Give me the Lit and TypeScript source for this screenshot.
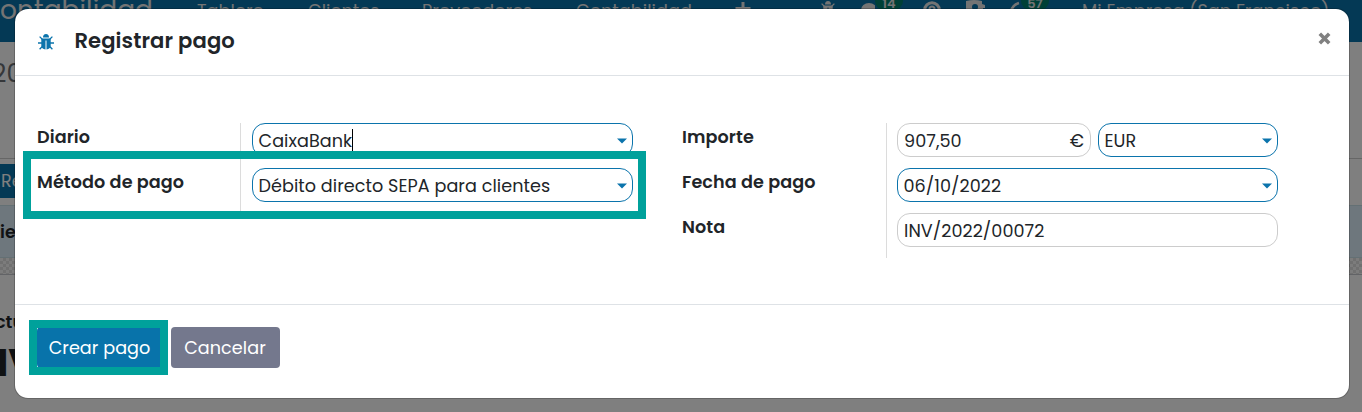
import { LitElement, html, css } from "lit";
import { customElement, property } from "lit/decorators.js";

const bug = html`<svg class="bug" viewBox="0 0 16 16" width="16" height="16" fill="none" stroke="currentColor">
  <path d="M5 3.600a3 3.500 0 0 1 6 0z" fill="currentColor" stroke="none"/>
  <path d="M3.300 4.600h9.400v7c0 2.200-1.800 3.800-4.200 4V6.500h-1v9.100C5 15.400 3.300 13.800 3.300 11.600z" fill="currentColor" stroke="none"/>
  <path d="M1.600 2.600 4.300 5.300M14.400 2.600 11.700 5.300M0 9h4M12 9h4M1.600 15.300 4.500 12.300M14.400 15.300 11.500 12.300" stroke-width="1.300"/>
</svg>`;

@customElement("form-field")
class FormField extends LitElement {
  @property() value = "";
  @property() suffix = "";
  @property({ type: Boolean }) select = false;
  @property({ type: Boolean }) caret = false;

  static styles = css`
    :host { display: block; min-width: 0; }
    .box {
      box-sizing: border-box; height: 34px; display: flex; align-items: center;
      border: 1px solid #ccc; border-radius: 13px; padding: 2px 6px 0 6px;
      background: #fff; color: #212529; font-size: 17.6px; letter-spacing: .06px; white-space: nowrap;
    }
    .select { border-color: #0b74ac; padding: 2px 5px 0 5.500px; }
    .grow { flex: 1; display: flex; align-items: center; }
    .cursor { width: 1px; height: 24px; background: #000; }
    .arrow { display: block; margin-top: -1px; }
  `;
  render() {
    return html`<div class="box ${this.select ? "select" : ""}">
      <span class="grow"><span>${this.value}</span>${this.caret ? html`<i class="cursor"></i>` : ""}</span>
      ${this.suffix ? html`<span>${this.suffix}</span>` : ""}
      ${this.select ? html`<svg class="arrow" width="10" height="6"><path d="M0 .5h10l-5 5z" fill="#0b74ac"/></svg>` : ""}
    </div>`;
  }
}

@customElement("app-root")
class AppRoot extends LitElement {
  static styles = css`
    :host {
      display: block; position: relative; width: 1362px; height: 412px; overflow: hidden;
      font-family: Poppins, Inter, "Open Sans", sans-serif;
      color: #212529; background: #fff;
    }
    * { box-sizing: border-box; }
    svg { display: block; }
    .nav {
      height: 42px; background: #0873aa; color: #e8e8e8; display: grid; white-space: nowrap;
      grid-template-columns: 197px 111px 114px 154px 159px 85px 41px 62px 42px 45px 72px 1fr;
      font-size: 17.6px; line-height: 23px; letter-spacing: .08px; align-items: start; overflow: hidden;
    }
    .brand { width: 153px; display: flex; justify-content: flex-end; font-size: 26.4px; line-height: 20px; }
    .nav .bug { margin-top: 1px; }
    .tool { display: flex; }
    .badge {
      background: #00806e; border-radius: 9px; height: 18px; width: 28px; margin-top: -8px;
      font-size: 13px; font-weight: 600; line-height: 23px; text-align: center; color: #e8e8e8;
    }
    .crumb { height: 117px; border-bottom: 1px solid #ccc; padding-top: 15px; font-size: 25px; line-height: 34px; color: #6a6f74; }
    .crumb span { margin-left: -8px; }
    .status { height: 46px; padding-top: 5px; }
    .action { width: 90px; height: 34px; background: #0873aa; color: #fff; font-size: 17.6px; line-height: 35px; padding-left: 1px; }
    .alert { height: 53px; background: #dceefb; border: solid #c8e0e8; border-width: 1px 0; line-height: 52px; font-weight: 600; font-size: 17.6px; }
    .texture {
      height: 17px; border-bottom: 1px solid #c4c6cc;
      background: repeating-conic-gradient(#e0e0e0 0 25%, #f8f8f8 0 50%) 0 0 / 6px 6px;
    }
    .sheet { padding-top: 35px; font-weight: 600; font-size: 17.6px; line-height: 24px; }
    .sheet span { margin-left: -5px; }
    .sheet h1 { margin: 5px 0 0 -32.500px; font-size: 39px; line-height: 48px; font-weight: 700; }
    .backdrop { position: absolute; inset: 0; background: rgba(0,0,0,.5); padding: 8px 12px 13px 14px; }
    .modal {
      height: 391px; background: #fff; background-clip: padding-box; border: 1px solid rgba(0,0,0,.2);
      border-radius: 14px; position: relative; display: flex; flex-direction: column;
    }
    .head { height: 67px; border-bottom: 1px solid #dee2e6; display: flex; padding: 0 18.500px 0 23px; }
    .head .icon { color: #0b74ac; padding-top: 25px; }
    h4 { margin: 19px auto 0 20.500px; font-size: 21.12px; line-height: 26px; font-weight: 600; letter-spacing: .08px; }
    .close { padding-top: 23px; }
    .body { height: 228px; padding: 47px 71px 0 22px; display: grid; grid-template-columns: 596px 596px; column-gap: 49px; align-items: start; }
    .group { display: grid; grid-template-columns: 203px 393px; }
    .group label { height: 45px; line-height: 28px; font-size: 17.6px; font-weight: 600; letter-spacing: .08px; white-space: nowrap; }
    .group.wide { grid-template-columns: 204px 392px; }
    .cell { height: 45px; border-left: 1px solid #dcdcdc; padding-left: 11px; }
    .wide .cell { padding-left: 10px; }
    .pair { display: grid; grid-template-columns: 194px 180px; column-gap: 7px; }
    .foot { flex: 1; border-top: 1px solid #dee2e6; display: flex; gap: 7px; padding: 22px; }
    button {
      height: 41px; border: 0; border-radius: 4px; padding: 1px 2px 0 0; font: inherit; font-size: 17.6px;
      letter-spacing: .06px; color: #fff; background: #0873aa; width: 127px; white-space: nowrap;
    }
    button.secondary { width: 109px; background: #74788d; padding-right: 1px; }
    .mark { position: absolute; border: 8px solid #00a19b; }
    .mark.method { left: 8px; top: 142px; width: 623px; height: 68px; }
    .mark.create { left: 14px; top: 311px; width: 139px; height: 55px; }
  `;

  render() {
    return html`
      <div class="nav">
        <span class="brand">Contabilidad</span>
        <span>Tablero</span><span>Clientes</span><span>Proveedores</span><span>Contabilidad</span>
        <svg width="16" height="18"><path d="M6.500 2h3v5h6v4h-6v5h-3v-5h-6V7h6z" fill="currentColor"/></svg>
        ${bug}
        <span class="tool"><svg width="14" height="20"><ellipse cx="8" cy="10" rx="8" ry="7" fill="currentColor"/></svg><b class="badge">14</b></span>
        <svg width="20" height="20"><circle cx="9" cy="10" r="7.300" fill="none" stroke="currentColor" stroke-width="3"/><path d="M6.500 9q0-2.500 2.500-2.500t2.500 2.500" fill="none" stroke="currentColor" stroke-width="2"/></svg>
        <svg width="22" height="20"><path d="M1 1q8-2 16 0v3l3 1v3h-2v10H1z" fill="currentColor"/><circle cx="10" cy="7" r="3" fill="#0873aa"/></svg>
        <span class="tool"><svg width="11" height="20"><path d="M9 3Q2 5 1 12" fill="none" stroke="currentColor" stroke-width="2.500"/></svg><b class="badge">57</b></span>
        <span>Mi Empresa (San Francisco)</span>
      </div>
      <div class="crumb"><span>2022</span></div>
      <div class="status"><div class="action">Re</div></div>
      <div class="alert">ie</div>
      <div class="texture"></div>
      <div class="sheet"><span>ctu</span><h1>INV</h1></div>

      <div class="backdrop">
        <div class="modal">
          <div class="head">
            <span class="icon">${bug}</span>
            <h4>Registrar pago</h4>
            <span class="close"><svg width="13" height="13"><path d="M1.800 1.800l9.400 9.400M11.200 1.800l-9.400 9.400" stroke="#808080" stroke-width="3.600"/></svg></span>
          </div>
          <div class="body">
            <div class="group">
              <label>Diario</label>
              <div class="cell"><form-field select caret value="CaixaBank"></form-field></div>
              <label>Método de pago</label>
              <div class="cell"><form-field select value="Débito directo SEPA para clientes"></form-field></div>
            </div>
            <div class="group wide">
              <label>Importe</label>
              <div class="cell pair"><form-field value="907,50" suffix="€"></form-field><form-field select value="EUR"></form-field></div>
              <label>Fecha de pago</label>
              <div class="cell"><form-field select value="06/10/2022"></form-field></div>
              <label>Nota</label>
              <div class="cell"><form-field value="INV/2022/00072"></form-field></div>
            </div>
          </div>
          <div class="foot"><button>Crear pago</button><button class="secondary">Cancelar</button></div>
          <div class="mark method"></div>
          <div class="mark create"></div>
        </div>
      </div>`;
  }
}
